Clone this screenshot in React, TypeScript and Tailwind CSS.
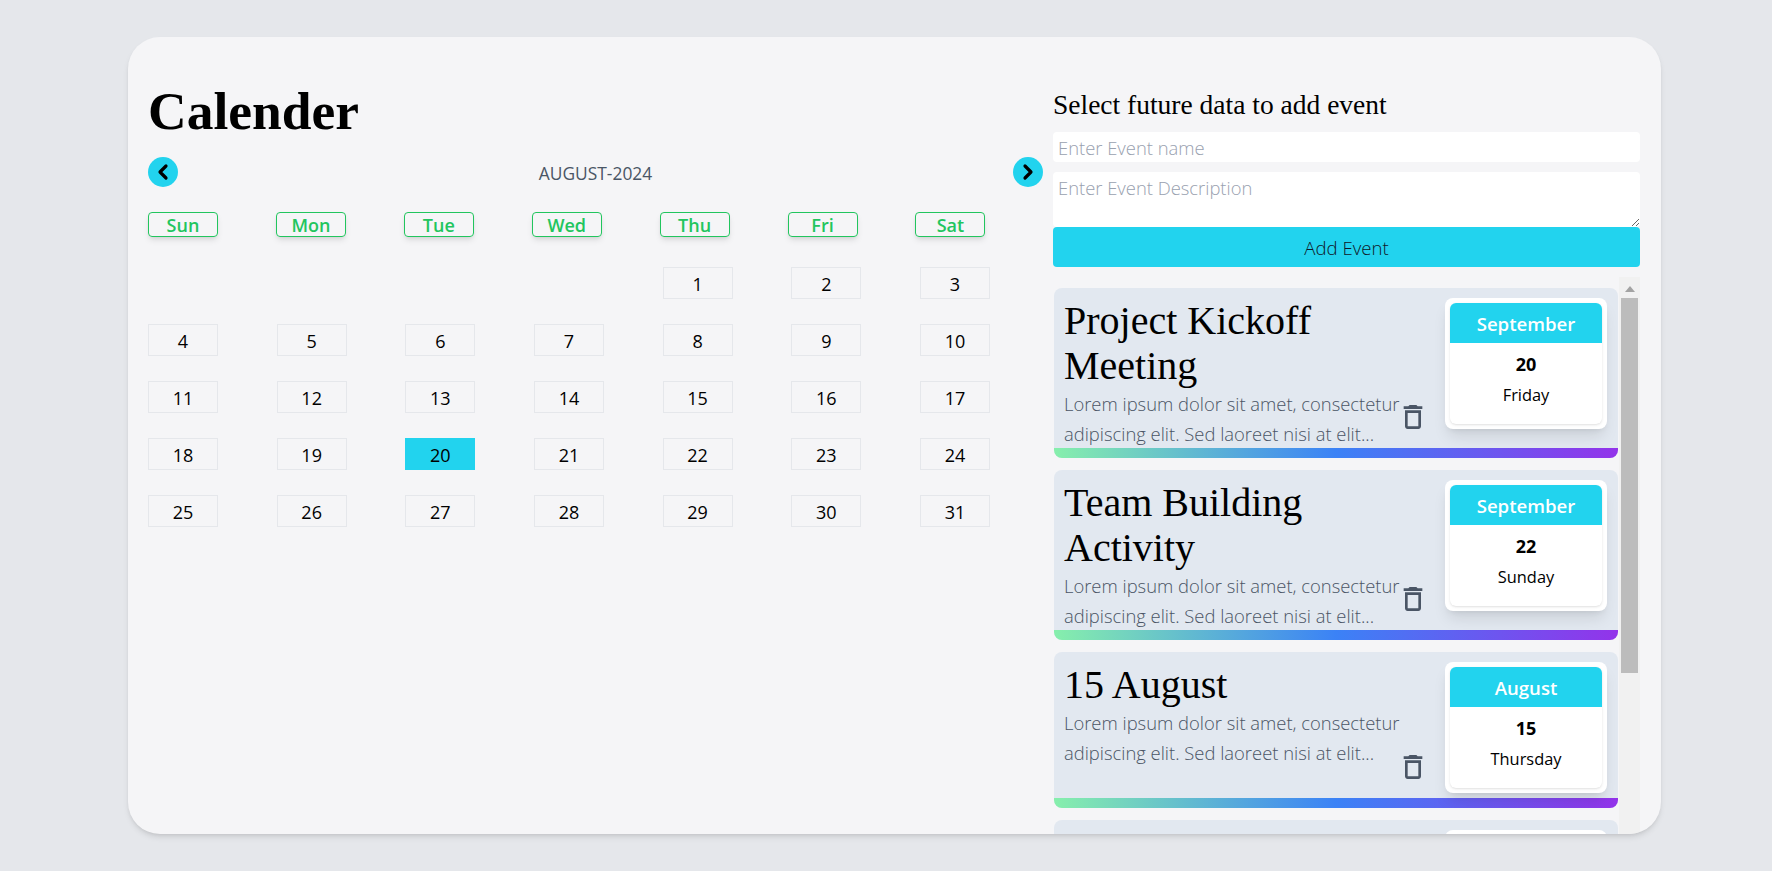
import { ChevronLeft, ChevronRight } from "lucide-react";
import { MdOutlineDelete } from "react-icons/md";

const WEEK_DAYS = ["Sun", "Mon", "Tue", "Wed", "Thu", "Fri", "Sat"];

const EVENTS = [
  { id: 1, title: "Project Kickoff Meeting", month: "September", date: 20, day: "Friday" },
  { id: 2, title: "Team Building Activity", month: "September", date: 22, day: "Sunday" },
  { id: 3, title: "15 August", month: "August", date: 15, day: "Thursday" },
  { id: 4, title: "Client Review Session", month: "August", date: 28, day: "Wednesday" },
];

const LOREM =
  "Lorem ipsum dolor sit amet, consectetur adipiscing elit. Sed laoreet nisi at elit...";

const sans = "font-['Open_Sans',sans-serif]";
const serif = "font-['Liberation_Serif',serif]";

function EventCard({ event }: { event: (typeof EVENTS)[number] }) {
  return (
    <div className="overflow-hidden rounded-lg bg-slate-200">
      <div className="flex items-start pl-[10px] pr-[11px] pt-[10px]">
        <div className="w-[339px] shrink-0">
          <h3 className={`${serif} text-[40px] leading-[45px] text-black`}>{event.title}</h3>
          <p className="-mb-[1px] pt-[1px] text-[18.4px] font-light leading-[30px] text-gray-600">
            {LOREM}
          </p>
        </div>
        <button className="mb-[15px] ml-[-6px] shrink-0 self-end text-gray-600">
          <MdOutlineDelete size={32} />
        </button>
        <div className="mb-[5px] ml-auto w-[162px] shrink-0 rounded-lg bg-white p-[5px] shadow-lg">
          <div className="h-[121px] overflow-hidden rounded-md bg-white text-center text-black shadow-sm">
            <div className="flex h-[40px] items-center justify-center bg-[#22d3ee] pt-[2px] text-[18.6px] font-semibold text-white">
              {event.month}
            </div>
            <div className="mt-[8px] text-[18px] font-bold leading-[26px]">{event.date}</div>
            <div className="mt-[5px] text-[16.4px] font-medium leading-[26px]">{event.day}</div>
          </div>
        </div>
      </div>
      <div className="h-[10px] bg-[linear-gradient(to_right,#86efac,#3b82f6,#9333ea)]" />
    </div>
  );
}

export default function App() {
  return (
    <div className={`${sans} h-[871px] overflow-hidden bg-gray-200 py-[37px] pl-[128px] pr-[111px]`}>
      <div className="flex h-[797px] overflow-hidden rounded-[32px] bg-[#f5f5f7] pl-[20px] shadow-md">
        <div className="w-[895px] shrink-0 pt-[46px]">
          <h1 className={`${serif} text-[53.5px] font-bold leading-[56px] text-black`}>Calender</h1>

          <div className="mt-[18px] flex h-[30px] items-center justify-between">
            <button className="flex size-[30px] items-center justify-center rounded-full bg-[#22d3ee] text-black">
              <ChevronLeft size={24} strokeWidth={3.2} />
            </button>
            <span className="pt-[2px] text-[17.4px] font-medium text-gray-600">AUGUST-2024</span>
            <button className="flex size-[30px] items-center justify-center rounded-full bg-[#22d3ee] text-black">
              <ChevronRight size={24} strokeWidth={3.2} />
            </button>
          </div>

          <div className="mt-[25px] flex w-[837.5px] justify-between">
            {WEEK_DAYS.map((day) => (
              <div
                key={day}
                className="flex h-[25px] w-[70px] items-center justify-center rounded-sm border border-[#22c55e] pt-[2px] text-[18px] font-semibold text-[#22c55e] shadow-md"
              >
                {day}
              </div>
            ))}
          </div>

          <div className="mt-[30px] grid w-[842px] grid-cols-[repeat(7,70px)] justify-between gap-y-[25px]">
            {Array.from({ length: 4 }).map((_, index) => (
              <div key={index} className="h-[32px]" />
            ))}
            {Array.from({ length: 31 }).map((_, index) => (
              <div
                key={index}
                className={`flex h-[32px] items-center justify-center border pt-[2px] text-[18px] text-black ${
                  index + 1 === 20 ? "border-[#22d3ee] bg-[#22d3ee]" : "border-gray-200"
                }`}
              >
                {index + 1}
              </div>
            ))}
          </div>
        </div>

        <div className="ml-[10px] w-[587px] shrink-0 pt-[52px]">
          <h2 className={`${serif} text-[27.5px] leading-[31px] text-black`}>Select future data to add event</h2>
          <input
            placeholder="Enter Event name"
            className="mt-[12px] block h-[30px] w-full rounded-sm bg-white px-[5px] text-[18.4px] font-light outline-none placeholder:text-gray-400"
          />
          <textarea
            placeholder="Enter Event Description"
            className="mt-[10px] block h-[55px] w-full rounded-sm bg-white px-[5px] pt-[2px] text-[18.4px] font-light outline-none placeholder:text-gray-400"
          />
          <button className="block h-[40px] w-full rounded-sm bg-[#22d3ee] pt-[1px] text-[18.6px] font-light text-gray-900">
            Add Event
          </button>

          <div className="mt-[10px] flex h-[600px] gap-[1px]">
            <div className="flex w-[565px] shrink-0 flex-col gap-[12px] overflow-hidden pl-[1px] pt-[11px]">
              {EVENTS.map((event) => (
                <div key={event.id} className="shrink-0">
                  <EventCard event={event} />
                </div>
              ))}
            </div>
            <div className="w-[21px] shrink-0 bg-[#f1f1f1]">
              <div className="flex h-[21px] items-center justify-center pt-[2px]">
                <svg width="10" height="6" viewBox="0 0 10 6">
                  <polygon points="5,0 10,6 0,6" fill="#a3a3a3" />
                </svg>
              </div>
              <div className="mx-[2px] h-[375px] bg-[#bcbcbc]" />
            </div>
          </div>
        </div>
      </div>
    </div>
  );
}
